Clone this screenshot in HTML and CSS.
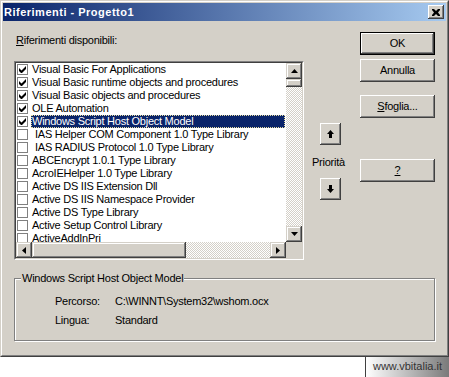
FILE: index.html
```html
<!DOCTYPE html>
<html lang="it">
<head>
    <meta charset="UTF-8">
    <meta name="viewport" content="width=device-width, initial-scale=1.0">
    <title>Riferimenti - Progetto1</title>
    <link rel="stylesheet" href="styles.css">
</head>
<body>
    <div class="window">
        <div class="window-inner">
            <div class="titlebar">
                <span class="title">Riferimenti - Progetto1</span>
                <button class="close-btn" aria-label="Chiudi">
                    <svg width="8" height="7" viewBox="0 0 8 7"><path d="M0 0h2l2 2 2-2h2v1L6 3.5 8 6v1H6L4 5 2 7H0V6l2-2.5L0 1z" fill="#000"/></svg>
                </button>
            </div>

            <div class="main">
                <div class="col-list">
                    <div class="label"><u>R</u>iferimenti disponibili:</div>
                    <div class="listbox">
                        <div class="listbox-inner">
                            <ul class="items">
                                <li class="item"><span class="check"><svg width="7" height="7" viewBox="0 0 7 7"><path d="M0 2v3l2 2h1l4-4V0L2.5 4.5z" fill="#000"/></svg></span><span class="name">Visual Basic For Applications</span></li>
                                <li class="item"><span class="check"><svg width="7" height="7" viewBox="0 0 7 7"><path d="M0 2v3l2 2h1l4-4V0L2.5 4.5z" fill="#000"/></svg></span><span class="name">Visual Basic runtime objects and procedures</span></li>
                                <li class="item"><span class="check"><svg width="7" height="7" viewBox="0 0 7 7"><path d="M0 2v3l2 2h1l4-4V0L2.5 4.5z" fill="#000"/></svg></span><span class="name">Visual Basic objects and procedures</span></li>
                                <li class="item"><span class="check"><svg width="7" height="7" viewBox="0 0 7 7"><path d="M0 2v3l2 2h1l4-4V0L2.5 4.5z" fill="#000"/></svg></span><span class="name">OLE Automation</span></li>
                                <li class="item"><span class="check"><svg width="7" height="7" viewBox="0 0 7 7"><path d="M0 2v3l2 2h1l4-4V0L2.5 4.5z" fill="#000"/></svg></span><span class="name selected">Windows Script Host Object Model</span></li>
                                <li class="item"><span class="check"></span><span class="name indent">IAS Helper COM Component 1.0 Type Library</span></li>
                                <li class="item"><span class="check"></span><span class="name indent">IAS RADIUS Protocol 1.0 Type Library</span></li>
                                <li class="item"><span class="check"></span><span class="name">ABCEncrypt 1.0.1 Type Library</span></li>
                                <li class="item"><span class="check"></span><span class="name">AcroIEHelper 1.0 Type Library</span></li>
                                <li class="item"><span class="check"></span><span class="name">Active DS IIS Extension Dll</span></li>
                                <li class="item"><span class="check"></span><span class="name">Active DS IIS Namespace Provider</span></li>
                                <li class="item"><span class="check"></span><span class="name">Active DS Type Library</span></li>
                                <li class="item"><span class="check"></span><span class="name">Active Setup Control Library</span></li>
                                <li class="item"><span class="check"></span><span class="name">ActiveAddInPri</span></li>
                            </ul>

                            <div class="vscroll">
                                <span class="sb-btn"><svg width="7" height="4" viewBox="0 0 7 4"><path d="M3.5 0L7 4H0z" fill="#000"/></svg></span>
                                <span class="sb-thumb sb-thumb-v"></span>
                                <span class="sb-track"></span>
                                <span class="sb-btn"><svg width="7" height="4" viewBox="0 0 7 4"><path d="M0 0h7L3.5 4z" fill="#000"/></svg></span>
                            </div>
                            <div class="hscroll">
                                <span class="sb-btn"><svg width="4" height="7" viewBox="0 0 4 7"><path d="M4 0v7L0 3.5z" fill="#000"/></svg></span>
                                <span class="sb-thumb sb-thumb-h"></span>
                                <span class="sb-track"></span>
                                <span class="sb-btn"><svg width="4" height="7" viewBox="0 0 4 7"><path d="M0 0l4 3.5L0 7z" fill="#000"/></svg></span>
                            </div>
                            <div class="sb-corner"></div>
                        </div>
                    </div>
                </div>

                <div class="col-priority">
                    <button class="btn-square btn-up" aria-label="Su">
                        <svg width="7" height="8" viewBox="0 0 7 8"><path d="M3.5 0L7 4H5v4H2V4H0z" fill="#000"/></svg>
                    </button>
                    <div class="priority-label">Priorità</div>
                    <button class="btn-square btn-down" aria-label="Giù">
                        <svg width="7" height="8" viewBox="0 0 7 8"><path d="M2 0h3v4h2L3.5 8 0 4h2z" fill="#000"/></svg>
                    </button>
                </div>

                <div class="col-buttons">
                    <button class="btn btn-default">OK</button>
                    <button class="btn btn-cancel">Annulla</button>
                    <button class="btn btn-browse"><u>S</u>foglia...</button>
                    <button class="btn btn-help"><u>?</u></button>
                </div>
            </div>

            <div class="groupbox">
                <span class="group-title">Windows Script Host Object Model</span>
                <div class="info-row">
                    <span class="info-label">Percorso:</span>
                    <span class="info-value">C:\WINNT\System32\wshom.ocx</span>
                </div>
                <div class="info-row">
                    <span class="info-label">Lingua:</span>
                    <span class="info-value">Standard</span>
                </div>
            </div>
        </div>
    </div>

    <div class="credit">www.vbitalia.it</div>
</body>
</html>
```

FILE: styles.css
```css
:root {
    --face: #d4d0c8;
    --shadow: #808080;
    --dark: #404040;
    --highlight: #ffffff;
    --select: #0a246a;
}

body {
    margin: 0;
    background: #fff;
    font-family: 'Liberation Sans', Arial, sans-serif;
    font-size: 11px;
    line-height: 13px;
    letter-spacing: -0.25px;
    color: #000;
}

button {
    font: inherit;
    color: inherit;
    letter-spacing: inherit;
    margin: 0;
    padding: 0;
    border: none;
    background: var(--face);
}

/* finestra */
.window {
    width: 449px;
    height: 357px;
    box-sizing: border-box;
    border: 1px solid;
    border-color: var(--face) var(--dark) var(--dark) var(--face);
}

.window-inner {
    height: 100%;
    box-sizing: border-box;
    border: 1px solid;
    border-color: var(--highlight) var(--shadow) var(--shadow) var(--highlight);
    background: var(--face);
    padding: 1px;
}

.titlebar {
    height: 18px;
    display: flex;
    align-items: center;
    justify-content: space-between;
    padding: 0 2px 0 1px;
    background: linear-gradient(to right, #0a246a, #a6caf0);
}

.title {
    color: #fff;
    font-weight: 700;
    letter-spacing: 0.5px;
}

.close-btn {
    width: 16px;
    height: 14px;
    display: flex;
    align-items: center;
    justify-content: center;
    box-shadow: inset -1px -1px var(--dark), inset 1px 1px var(--highlight), inset -2px -2px var(--shadow);
}

/* parte principale */
.main {
    display: flex;
    padding: 11px 11px 0;
}

.col-list {
    width: 290px;
}

.label {
    margin: 2px 0 14px 2px;
}

.listbox {
    width: 290px;
    height: 199px;
    box-sizing: border-box;
    border: 1px solid;
    border-color: var(--shadow) var(--highlight) var(--highlight) var(--shadow);
}

.listbox-inner {
    height: 100%;
    box-sizing: border-box;
    border: 1px solid;
    border-color: var(--dark) var(--face) var(--face) var(--dark);
    background: #fff;
    display: grid;
    grid-template-columns: 1fr 16px;
    grid-template-rows: 1fr 16px;
}

.items {
    list-style: none;
    margin: 0;
    padding: 0;
    overflow: hidden;
}

.item {
    height: 13px;
    display: flex;
    align-items: center;
    white-space: nowrap;
}

.check {
    width: 11px;
    height: 11px;
    box-sizing: border-box;
    margin-left: 1px;
    border: 1px solid var(--shadow);
    display: flex;
    align-items: center;
    justify-content: center;
    flex: none;
}

.name {
    flex: 1;
    margin: 0 1px 0 3px;
    padding-left: 1px;
    height: 13px;
    box-sizing: border-box;
}

.name.indent {
    padding-left: 4px;
}

.name.selected {
    background: var(--select);
    color: #fff;
    outline: 1px dotted #e6dca0;
    outline-offset: -1px;
}

/* barre di scorrimento */
.vscroll,
.hscroll {
    display: flex;
}

.vscroll {
    flex-direction: column;
}

.sb-btn,
.sb-thumb,
.close-btn,
.btn-square {
    background: var(--face);
}

.sb-btn {
    width: 16px;
    height: 16px;
    flex: none;
    display: flex;
    align-items: center;
    justify-content: center;
    box-shadow: inset -1px -1px var(--dark), inset 1px 1px var(--face), inset -2px -2px var(--shadow), inset 2px 2px var(--highlight);
}

.sb-thumb {
    flex: none;
    box-shadow: inset -1px -1px var(--dark), inset 1px 1px var(--face), inset -2px -2px var(--shadow), inset 2px 2px var(--highlight);
}

.sb-thumb-v {
    height: 8px;
}

.sb-thumb-h {
    width: 154px;
}

.sb-track {
    flex: 1;
    background: repeating-conic-gradient(#fff 0 25%, var(--face) 0 50%) 0 0 / 2px 2px;
}

.sb-corner {
    background: var(--face);
}

/* priorità */
.col-priority {
    width: 56px;
    display: flex;
    flex-direction: column;
    padding-top: 91px;
}

.btn-square {
    width: 21px;
    height: 22px;
    margin-left: 16px;
    display: flex;
    align-items: center;
    justify-content: center;
    box-shadow: inset -1px -1px var(--dark), inset 1px 1px var(--highlight), inset -2px -2px var(--shadow);
}

.priority-label {
    margin: 11px 0 9px 8px;
}

/* pulsanti */
.col-buttons {
    width: 75px;
    display: flex;
    flex-direction: column;
}

.btn {
    width: 75px;
    height: 23px;
    box-shadow: inset -1px -1px var(--dark), inset 1px 1px var(--highlight), inset -2px -2px var(--shadow);
}

.btn-default {
    border: 1px solid #000;
    box-shadow: inset -1px -1px var(--dark), inset 1px 1px var(--highlight), inset -2px -2px var(--shadow);
}

.btn-cancel {
    margin-top: 4px;
}

.btn-browse {
    margin-top: 13px;
}

.btn-help {
    margin-top: 41px;
}

/* riquadro informazioni */
.groupbox {
    position: relative;
    margin: 18px 11px 0;
    height: 63px;
    box-sizing: border-box;
    border: 1px solid var(--shadow);
    box-shadow: inset 1px 1px var(--highlight), 1px 1px var(--highlight);
    padding: 16px 0 0 40px;
}

.group-title {
    position: absolute;
    top: -7px;
    left: 6px;
    padding: 0 1px;
    background: var(--face);
}

.info-row {
    display: flex;
    margin-bottom: 6px;
}

.info-label {
    width: 60px;
}

/* firma */
.credit {
    width: 84px;
    height: 20px;
    margin-left: auto;
    box-sizing: border-box;
    border-left: 1px solid var(--dark);
    background: linear-gradient(to right, #fff, #7a7a7a);
    color: #333;
    font-family: Arial, 'Liberation Sans', sans-serif;
    letter-spacing: 0;
    line-height: 19px;
    text-align: center;
}
```
